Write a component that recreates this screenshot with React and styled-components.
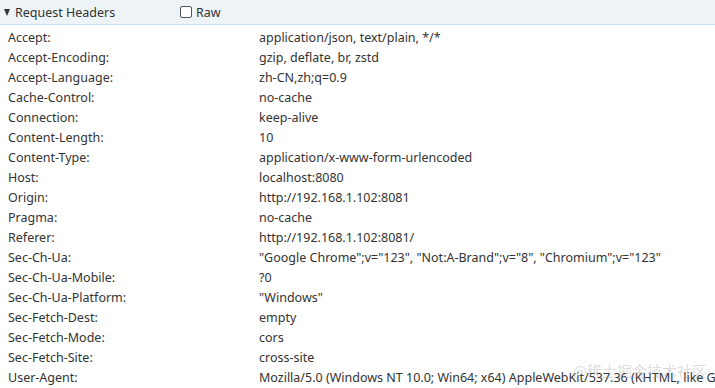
import React from 'react';
import styled, { createGlobalStyle } from 'styled-components';

const GlobalStyle = createGlobalStyle`
  html, body {
    margin: 0;
    padding: 0;
    background: #ffffff;
  }
  body {
    font-family: 'Noto Sans', 'Noto Sans CJK SC', sans-serif;
    color: #333333;
    overflow: hidden;
  }
`;

const Panel = styled.div`
  position: relative;
  width: 715px;
  height: 388px;
  overflow: hidden;
`;

const Header = styled.div`
  height: 25px;
  display: flex;
  align-items: center;
  background: #edf3f7;
  border-bottom: solid 1px #c6e1ef;
  box-sizing: border-box;
  font-size: 12.5px;
  color: #333;
`;

const Title = styled.div`
  width: 180px;
  display: flex;
  align-items: center;
  padding-left: 4px;
  box-sizing: border-box;
`;

const Arrow = styled.span`
  width: 0;
  height: 0;
  border-left: 3.5px solid transparent;
  border-right: 3.5px solid transparent;
  border-top: 7px solid #333;
  margin-right: 5px;
  margin-top: 1px;
`;

const RawToggle = styled.label`
  display: flex;
  align-items: center;
`;

const Box = styled.span`
  width: 10px;
  height: 10px;
  border: solid 1px #555;
  border-radius: 2px;
  margin-right: 4px;
  background: #fff;
`;

const List = styled.div`
  padding-top: 2px;
`;

const Row = styled.div`
  height: 20px;
  display: flex;
  align-items: center;
  font-size: 12.5px;
  color: #333;
  white-space: nowrap;
`;

const Name = styled.div`
  width: 259px;
  padding-left: 8px;
  box-sizing: border-box;
  flex-shrink: 0;
`;

const Value = styled.div`
  flex: 1;
`;

const Watermark = styled.div`
  position: absolute;
  right: 8px;
  bottom: 9px;
  font-size: 15px;
  line-height: 16px;
  color: rgba(140, 140, 140, 0.3);
  font-family: 'Noto Sans CJK SC', sans-serif;
  pointer-events: none;
`;

const headers = [
  ['Accept:', 'application/json, text/plain, */*'],
  ['Accept-Encoding:', 'gzip, deflate, br, zstd'],
  ['Accept-Language:', 'zh-CN,zh;q=0.9'],
  ['Cache-Control:', 'no-cache'],
  ['Connection:', 'keep-alive'],
  ['Content-Length:', '10'],
  ['Content-Type:', 'application/x-www-form-urlencoded'],
  ['Host:', 'localhost:8080'],
  ['Origin:', 'http://192.168.1.102:8081'],
  ['Pragma:', 'no-cache'],
  ['Referer:', 'http://192.168.1.102:8081/'],
  ['Sec-Ch-Ua:', '"Google Chrome";v="123", "Not:A-Brand";v="8", "Chromium";v="123"'],
  ['Sec-Ch-Ua-Mobile:', '?0'],
  ['Sec-Ch-Ua-Platform:', '"Windows"'],
  ['Sec-Fetch-Dest:', 'empty'],
  ['Sec-Fetch-Mode:', 'cors'],
  ['Sec-Fetch-Site:', 'cross-site'],
  ['User-Agent:', 'Mozilla/5.0 (Windows NT 10.0; Win64; x64) AppleWebKit/537.36 (KHTML, like Gecko) Chrome/123.0.0.0 Safari/537.36'],
];

const App = () => (
  <Panel>
    <GlobalStyle />
    <Header>
      <Title>
        <Arrow />
        Request Headers
      </Title>
      <RawToggle>
        <Box />
        Raw
      </RawToggle>
    </Header>
    <List>
      {headers.map(([name, value]) => (
        <Row key={name}>
          <Name>{name}</Name>
          <Value>{value}</Value>
        </Row>
      ))}
    </List>
    <Watermark>@稀土掘金技术社区</Watermark>
  </Panel>
);

export default App;
